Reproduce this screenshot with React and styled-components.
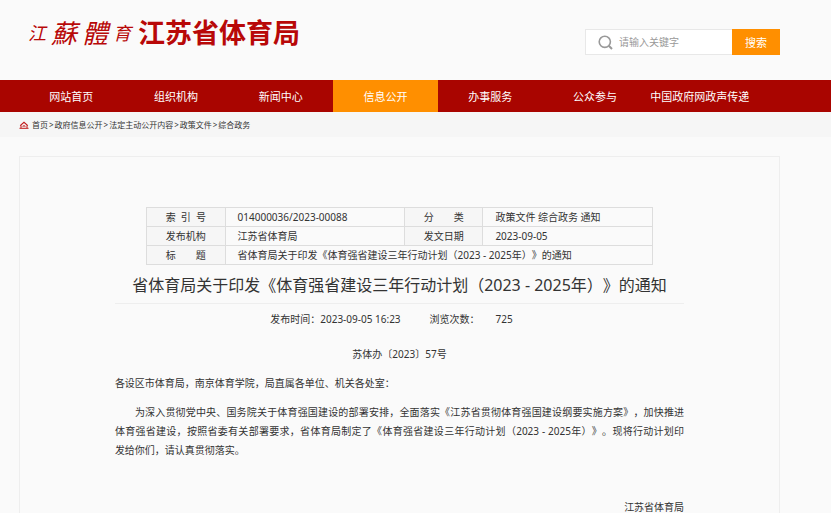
import React from 'react'
import styled, { createGlobalStyle } from 'styled-components'

const GlobalStyle = createGlobalStyle`
  * {
    box-sizing: border-box;
  }
  body {
    margin: 0;
    background-color: #fafafa;
    color: #333;
    font-family: 'Noto Sans', 'Noto Sans CJK SC', sans-serif;
    font-size: 10px;
    line-height: 19px;
    text-spacing-trim: space-all;
  }
  a {
    color: inherit;
    text-decoration: none;
  }
  p, h1 {
    margin: 0;
  }
`

const Header = styled.header`
  display: flex;
  align-items: center;
  justify-content: space-between;
  height: 80px;
  padding: 4px 51px 0 28px;
`

const Logo = styled.a`
  display: flex;
  align-items: center;
  color: #b80808;
  line-height: 36px;
  padding-bottom: 18px;
`

const Script = styled.span`
  display: flex;
  align-items: center;
  gap: 5px;
  width: 110px;
  font-style: italic;
  font-weight: 400;
`

const ScriptChar = styled.span`
  font-size: ${props => (props.$large ? '26px' : '18px')};
`

const SiteName = styled.span`
  font-size: 27px;
  font-weight: 700;
`

const SearchForm = styled.form`
  display: flex;
  width: 195px;
  height: 26px;
`

const SearchBox = styled.label`
  display: flex;
  flex: 1;
  align-items: center;
  gap: 6px;
  min-width: 0;
  padding-left: 12px;
  background-color: #fff;
  border: 1px solid #e8e8e8;
  border-right: 0;
`

const SearchInput = styled.input`
  flex: 1;
  min-width: 0;
  padding: 0;
  border: 0;
  outline: 0;
  background: none;
  color: #333;
  font-family: inherit;
  font-size: 10px;

  &::placeholder {
    color: #999;
    opacity: 1;
  }
`

const SearchButton = styled.button`
  width: 48px;
  padding: 0;
  border: 0;
  background-color: #ff8f00;
  color: #fff;
  font-family: inherit;
  font-size: 11px;
`

const Nav = styled.nav`
  display: flex;
  height: 32px;
  padding: 0 79px 0 19px;
  background-color: #a90500;
`

const NavLink = styled.a`
  flex: 1 1 0;
  background-color: ${props => (props.$active ? '#ff8f00' : 'transparent')};
  color: #fff;
  font-size: 11px;
  line-height: 33px;
  text-align: center;
  white-space: nowrap;
`

const Breadcrumb = styled.nav`
  display: flex;
  align-items: center;
  gap: 1px;
  height: 25px;
  padding-left: 19px;
  background-color: #f6f6f6;
  font-size: 8px;

  svg {
    margin-right: 2px;
  }
`

const Panel = styled.main`
  margin: 19px 51px 0 19px;
  padding: 50px 0 20px;
  border: 1px solid #eee;
`

const Article = styled.article`
  width: 75%;
  margin: 0 auto;
`

const InfoTable = styled.table`
  width: 89%;
  margin: 0 auto;
  border-collapse: collapse;
  table-layout: fixed;
  line-height: 18px;
`

const InfoLabel = styled.th`
  padding: 0;
  border: 1px solid #ddd;
  background-color: #f6f6f6;
  font-weight: 400;
  text-align: center;
`

const InfoValue = styled.td`
  padding: 0 0 0 12px;
  border: 1px solid #ddd;
  white-space: nowrap;
`

const Title = styled.h1`
  padding: 6px 0 4px;
  border-bottom: 1px solid #eee;
  font-size: 16px;
  font-weight: 400;
  line-height: 28px;
  text-align: center;
  white-space: nowrap;
`

const Meta = styled.div`
  display: flex;
  justify-content: center;
  gap: 29px;
  padding: 6px 16px 16px 0;
`

const ViewCount = styled.span`
  margin-left: 16px;
`

const Paragraph = styled.p`
  margin-bottom: 10px;
  text-align: ${props => props.$align || 'left'};
`

const Line = styled.span`
  display: block;
  text-indent: ${props => (props.$indent ? '2em' : '0')};
  text-align-last: ${props => (props.$last ? 'left' : 'justify')};
  white-space: nowrap;
`

const Signature = styled.p`
  margin-top: 38px;
  text-align: right;
`

const navItems = [
  '网站首页',
  '组织机构',
  '新闻中心',
  '信息公开',
  '办事服务',
  '公众参与',
  '中国政府网政声传递',
]

const crumbs = ['首页', '政府信息公开', '法定主动公开内容', '政策文件', '综合政务']

const SearchIcon = () => (
  <svg width="15" height="15" viewBox="0 0 15 15" fill="none" stroke="#999" strokeWidth="1.6" aria-hidden="true">
    <circle cx="6.8" cy="6.8" r="5.6" />
    <path d="M10.8 10.8L14 14" strokeWidth="2" />
  </svg>
)

const HomeIcon = () => (
  <svg width="10" height="8" viewBox="0 0 10 8" fill="none" stroke="#c01818" aria-hidden="true">
    <path d="M1.2 4.6L5 1.2L8.8 4.6" strokeWidth="1.2" />
    <path d="M2 4.4V7M8 4.4V7M0.5 7.3H9.5" />
    <path d="M4 6V4.8H6V6" strokeWidth="0.8" />
  </svg>
)

const App = () => (
  <div lang="zh-CN">
    <GlobalStyle />
    <Header>
      <Logo href="#">
        <Script>
          <ScriptChar>江</ScriptChar>
          <ScriptChar $large>蘇</ScriptChar>
          <ScriptChar $large>體</ScriptChar>
          <ScriptChar>育</ScriptChar>
        </Script>
        <SiteName>江苏省体育局</SiteName>
      </Logo>
      <SearchForm>
        <SearchBox>
          <SearchIcon />
          <SearchInput type="text" placeholder="请输入关键字" aria-label="搜索" />
        </SearchBox>
        <SearchButton type="button">搜索</SearchButton>
      </SearchForm>
    </Header>

    <Nav>
      {navItems.map(item => (
        <NavLink key={item} href="#" $active={item === '信息公开'}>
          {item}
        </NavLink>
      ))}
    </Nav>

    <Breadcrumb>
      <HomeIcon />
      {crumbs.map((crumb, index) => (
        <React.Fragment key={crumb}>
          {index > 0 && <span>&gt;</span>}
          <a href="#">{crumb}</a>
        </React.Fragment>
      ))}
    </Breadcrumb>

    <Panel>
      <Article>
        <InfoTable>
          <colgroup>
            <col style={{ width: '15.5%' }} />
            <col style={{ width: '35.5%' }} />
            <col style={{ width: '15.5%' }} />
            <col />
          </colgroup>
          <tbody>
            <tr>
              <InfoLabel scope="row">索&nbsp;&nbsp;引&nbsp;&nbsp;号</InfoLabel>
              <InfoValue>014000036/2023-00088</InfoValue>
              <InfoLabel scope="row">分　　类</InfoLabel>
              <InfoValue>政策文件 综合政务 通知</InfoValue>
            </tr>
            <tr>
              <InfoLabel scope="row">发布机构</InfoLabel>
              <InfoValue>江苏省体育局</InfoValue>
              <InfoLabel scope="row">发文日期</InfoLabel>
              <InfoValue>2023-09-05</InfoValue>
            </tr>
            <tr>
              <InfoLabel scope="row">标　　题</InfoLabel>
              <InfoValue colSpan={3}>
                省体育局关于印发《体育强省建设三年行动计划（2023 - 2025年）》的通知
              </InfoValue>
            </tr>
          </tbody>
        </InfoTable>

        <Title>省体育局关于印发《体育强省建设三年行动计划（2023 - 2025年）》的通知</Title>

        <Meta>
          <span>发布时间：2023-09-05 16:23</span>
          <span>
            浏览次数：<ViewCount>725</ViewCount>
          </span>
        </Meta>

        <Paragraph $align="center">苏体办〔2023〕57号</Paragraph>
        <Paragraph>各设区市体育局，南京体育学院，局直属各单位、机关各处室：</Paragraph>
        <Paragraph>
          <Line $indent>
            为深入贯彻党中央、国务院关于体育强国建设的部署安排，全面落实《江苏省贯彻体育强国建设纲要实施方案》，加快推进
          </Line>
          <Line>
            体育强省建设，按照省委有关部署要求，省体育局制定了《体育强省建设三年行动计划（2023 - 2025年）》。现将行动计划印
          </Line>
          <Line $last>发给你们，请认真贯彻落实。</Line>
        </Paragraph>
        <Signature>江苏省体育局</Signature>
      </Article>
    </Panel>
  </div>
)

export default App
